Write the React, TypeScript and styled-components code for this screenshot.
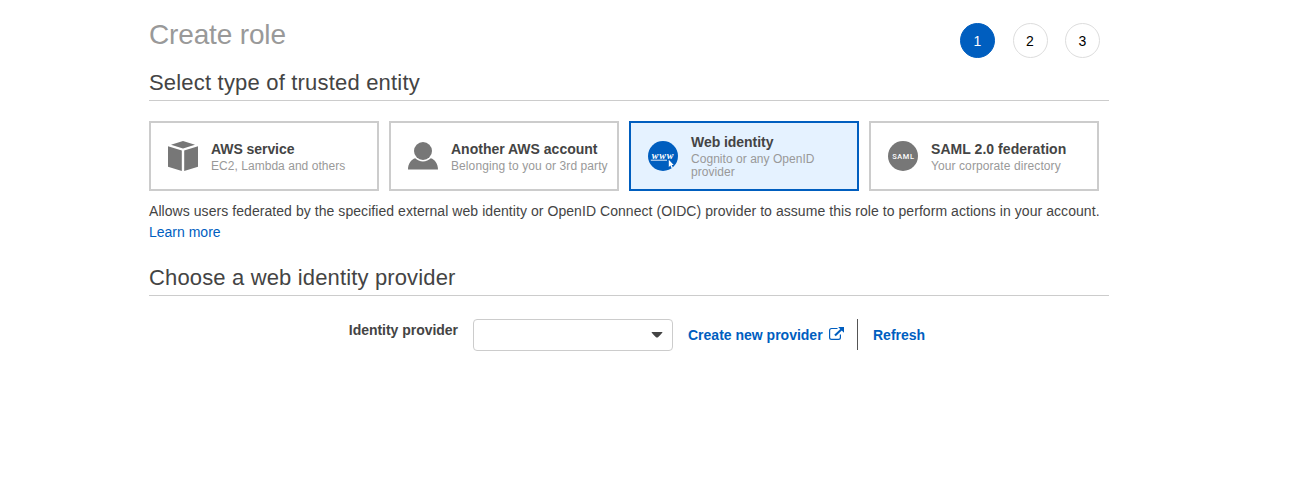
import React from "react";
import styled, { createGlobalStyle } from "styled-components";

const BLUE = "#005ebf";

const GlobalStyle = createGlobalStyle`
  * { box-sizing: border-box; }
  body {
    margin: 0;
    background: #fff;
    color: #444;
    font: 14px/21px "Liberation Sans", Arial, sans-serif;
  }
`;

const Page = styled.main`
  width: 960px;
  margin-left: 149px;
  padding-top: 16px;
`;

const Header = styled.header`
  display: flex;
  justify-content: space-between;
  height: 51px;
`;

const Title = styled.h1`
  margin: 0;
  color: #999;
  font-size: 28px;
  font-weight: 400;
  line-height: 38px;
  letter-spacing: -0.15px;
`;

const Steps = styled.div`
  display: flex;
  gap: 17.5px;
  margin: 7px 9px 0 0;
`;

const Step = styled.span<{ $active?: boolean }>`
  width: 35px;
  height: 35px;
  border: 1px solid ${(p) => (p.$active ? BLUE : "#ddd")};
  border-radius: 50%;
  background: ${(p) => (p.$active ? BLUE : "#fff")};
  color: ${(p) => (p.$active ? "#fff" : "#000")};
  line-height: 34px;
  text-align: center;
`;

const SectionTitle = styled.h2<{ $tracking: number }>`
  margin: 0;
  height: 34px;
  border-bottom: 1px solid #ccc;
  font-size: 22px;
  font-weight: 400;
  line-height: 31px;
  letter-spacing: ${(p) => p.$tracking}px;
`;

const Cards = styled.div`
  display: flex;
  gap: 10px;
  margin-top: 20px;
`;

const Card = styled.button<{ $selected?: boolean }>`
  display: flex;
  align-items: center;
  gap: 13px;
  width: 230px;
  height: 70px;
  padding: 0 0 0 17px;
  border: 2px solid ${(p) => (p.$selected ? BLUE : "#ccc")};
  background: ${(p) => (p.$selected ? "#e5f2ff" : "#fff")};
  font-family: inherit;
  text-align: left;
`;

const CardText = styled.span`
  display: flex;
  flex-direction: column;
  gap: 2px;
`;

const CardTitle = styled.strong<{ $tracking: number }>`
  color: #444;
  font-size: 14px;
  line-height: 18px;
  letter-spacing: ${(p) => p.$tracking}px;
  white-space: nowrap;
`;

const CardNote = styled.span<{ $tracking: number }>`
  color: #999;
  font-size: 12px;
  line-height: 13px;
  letter-spacing: ${(p) => p.$tracking}px;
  white-space: pre;
`;

const Icon = styled.svg`
  display: block;
  flex: none;
`;

const Description = styled.p`
  margin: 10px 0 0;
  white-space: nowrap;
`;

const DescriptionLine = styled.span`
  display: block;
  letter-spacing: 0.06px;
`;

const Link = styled.a<{ $bold?: boolean; $tracking?: number }>`
  color: ${BLUE};
  font-weight: ${(p) => (p.$bold ? 700 : 400)};
  letter-spacing: ${(p) => p.$tracking ?? 0}px;
  text-decoration: none;
  white-space: nowrap;
`;

const Provider = styled.section`
  margin-top: 19px;
`;

const FormRow = styled.div`
  display: flex;
  height: 32px;
  margin-top: 23px;
`;

const Label = styled.label`
  width: 309px;
  margin-right: 15px;
  text-align: right;
  font-weight: 700;
  line-height: 22px;
  letter-spacing: -0.03px;
`;

const Select = styled.button`
  display: flex;
  align-items: center;
  justify-content: flex-end;
  width: 200px;
  height: 32px;
  margin-right: 15px;
  padding: 0 9px 0 0;
  border: 1px solid #ccc;
  border-radius: 4px;
  background: #fff;
`;

const Actions = styled.div`
  display: flex;
  align-items: flex-start;
  line-height: 32px;
`;

const CreateAction = styled.div`
  display: flex;
  gap: 6px;
  width: 170px;
  height: 31px;
  border-right: 1px solid #555;
  margin-right: 15px;
`;

const CubeIcon = () => (
  <Icon width="30" height="30" viewBox="0 0 30 30" fill="#777">
    <path d="M15 0 27 3.7 15 7.5 3 3.7Z" />
    <path d="M0 5.3 13.8 9.5V30L0 25.7Z" />
    <path d="M30 5.3 16.2 9.5V30L30 25.7Z" />
  </Icon>
);

const UserIcon = () => (
  <Icon width="30" height="30" viewBox="0 0 30 30" fill="#777">
    <circle cx="15" cy="10" r="9" />
    <path d="M0 28.5C0 23 3.2 18.3 7.2 17.2C9.2 19.2 12 20.4 15 20.4S20.8 19.2 22.8 17.2C26.8 18.3 30 23 30 28.5Z" />
  </Icon>
);

const WebIcon = () => (
  <Icon width="30" height="30" viewBox="0 0 30 30">
    <circle cx="15" cy="15" r="15" fill={BLUE} />
    <text x="3.8" y="17.6" fill="#fff" fontFamily="Liberation Serif, serif" fontStyle="italic" fontWeight="700" fontSize="10" letterSpacing="0.8">
      www
    </text>
    <path d="M2.8 19.2H19" stroke="#fff" strokeWidth="0.9" />
    <path d="M20.8 18.8V26L22.4 24.6 23.6 27.2 24.9 26.6 23.7 24.1H25.7Z" fill="#fff" />
  </Icon>
);

const SamlIcon = () => (
  <Icon width="30" height="30" viewBox="0 0 30 30">
    <circle cx="15" cy="15" r="15" fill="#777" />
    <text x="4.3" y="17.8" fill="#fff" fontFamily="Roboto, sans-serif" fontWeight="500" fontSize="7.4" letterSpacing="0.6">
      SAML
    </text>
  </Icon>
);

const CaretIcon = () => (
  <Icon width="12" height="6" viewBox="0 0 12 6">
    <path d="M0.5 0H11.5Q11 1.5 7 5.2Q6 6 5 5.2Q1 1.5 .5 0Z" fill="#444" />
  </Icon>
);

const ExternalMark = styled(Icon)`
  margin-top: 8px;
`;

const ExternalIcon = () => (
  <ExternalMark width="16" height="14" viewBox="0 0 16 14" fill="none" stroke={BLUE}>
    <path d="M8.5 1.5H2.5Q.6 1.5 .6 3.4V10.5Q.6 12.4 2.5 12.4H9.5Q11.4 12.4 11.4 10.5V7.5" strokeWidth="1.2" />
    <path d="M6 8.4 12.6 2.2" strokeWidth="2.1" />
    <path d="M9.2 0H15V5.8Z" fill={BLUE} stroke="none" />
  </ExternalMark>
);

const entities = [
  { title: "AWS service", note: "EC2, Lambda and others", icon: <CubeIcon />, tt: -0.06, nt: 0.04 },
  { title: "Another AWS account", note: "Belonging to you or 3rd party", icon: <UserIcon />, tt: 0, nt: 0.09 },
  { title: "Web identity", note: "Cognito or any OpenID\nprovider", icon: <WebIcon />, selected: true, tt: -0.05, nt: 0.04 },
  { title: "SAML 2.0 federation", note: "Your corporate directory", icon: <SamlIcon />, tt: 0.05, nt: 0.09 },
];

export default function App() {
  return (
    <>
      <GlobalStyle />
      <Page>
        <Header>
          <Title>Create role</Title>
          <Steps>
            <Step $active>1</Step>
            <Step>2</Step>
            <Step>3</Step>
          </Steps>
        </Header>
        <SectionTitle $tracking={0.19}>Select type of trusted entity</SectionTitle>
        <Cards>
          {entities.map((e) => (
            <Card key={e.title} $selected={e.selected}>
              {e.icon}
              <CardText>
                <CardTitle $tracking={e.tt}>{e.title}</CardTitle>
                <CardNote $tracking={e.nt}>{e.note}</CardNote>
              </CardText>
            </Card>
          ))}
        </Cards>
        <Description>
          <DescriptionLine>
            Allows users federated by the specified external web identity or OpenID Connect (OIDC) provider to assume this role to perform actions in your account.
          </DescriptionLine>
          <Link>Learn more</Link>
        </Description>
        <Provider>
          <SectionTitle $tracking={0.15}>Choose a web identity provider</SectionTitle>
          <FormRow>
            <Label>Identity provider</Label>
            <Select aria-label="Identity provider">
              <CaretIcon />
            </Select>
            <Actions>
              <CreateAction>
                <Link $bold>Create new provider</Link>
                <ExternalIcon />
              </CreateAction>
              <Link $bold>Refresh</Link>
            </Actions>
          </FormRow>
        </Provider>
      </Page>
    </>
  );
}
